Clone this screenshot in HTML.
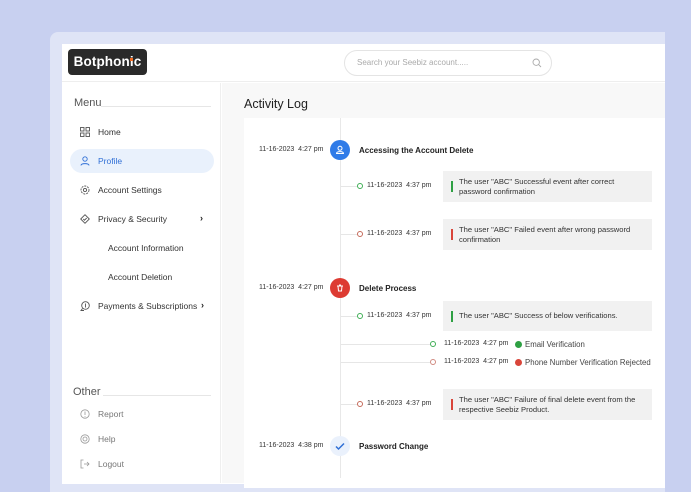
<!DOCTYPE html>
<html><head><style>
*{margin:0;padding:0;box-sizing:border-box}
body{width:691px;height:478px;overflow:hidden;background:#c8d0f0;font-family:"Liberation Sans",sans-serif;position:relative;color:#222}
.a{position:absolute}
.frame{left:50px;top:32px;width:615px;height:460px;background:#dfe4f6;border-radius:8px 0 0 0}
.white{left:62px;top:44px;width:603px;height:440px;background:#fff}
.hdr{left:62px;top:44px;width:603px;height:38px;background:#fff;border-bottom:1px solid #eee}
.logo{left:68px;top:49px;width:79px;height:26px;background:#2a2a2a;border-radius:4px;color:#fff;font-weight:bold;font-size:13.5px;line-height:26px;text-align:center;letter-spacing:0.1px}
.search{left:344px;top:50px;width:208px;height:26px;border:1px solid #e4e4e4;border-radius:13px;font-size:8px;color:#aaa;line-height:24px;padding-left:12px}
.side{left:62px;top:83px;width:159px;height:400px;background:#fff;border-right:1px solid #efefef}
.main{left:222px;top:83px;width:443px;height:400px;background:#f8f8f8}
.panel{left:244px;top:118px;width:421px;height:370px;background:#fff}
.sec{font-size:11px;color:#555}
.line{height:1px;background:#e6e6e6}
.item{font-size:8.5px;color:#333;left:98px}
.ico{left:80px;width:10px;height:10px}
.t{font-size:7px;color:#333}
.dot{width:6px;height:6px;border-radius:50%;border:1px solid}
.box{background:#f1f1f1;font-size:7.6px;color:#333;padding:0 8px;line-height:10px;display:flex;align-items:center}
.bar{width:2px;height:11px;margin-right:6px;flex:none}
.big{width:20px;height:20px;border-radius:50%}
.h{font-size:8px;font-weight:bold;color:#222;left:359px}
</style></head><body>
<div class="a frame"></div>
<div class="a white"></div>
<div class="a hdr"></div>
<div class="a logo">Botphon<span style="position:relative">i<span style="position:absolute;left:0.5px;top:4px;width:3px;height:3px;background:#f26a21"></span></span>c</div>
<div class="a search">Search your Seebiz account.....
<svg class="a" style="right:9px;top:7px" width="10" height="10" viewBox="0 0 10 10"><circle cx="4.2" cy="4.2" r="3.2" fill="none" stroke="#aaa" stroke-width="0.9"/><path d="M6.6 6.6L9 9" stroke="#aaa" stroke-width="0.9"/></svg></div>
<div class="a side"></div>
<div class="a main"></div>
<div class="a panel"></div>

<div class="a sec" style="left:74px;top:97px">Menu</div>
<div class="a line" style="left:101px;top:106px;width:110px"></div>
<svg class="a ico" style="top:127px" viewBox="0 0 10 10" fill="none" stroke="#555" stroke-width="0.9"><rect x="0.5" y="0.5" width="3.5" height="3.5"/><rect x="6" y="0.5" width="3.5" height="3.5"/><rect x="0.5" y="6" width="3.5" height="3.5"/><rect x="6" y="6" width="3.5" height="3.5"/></svg>
<div class="a item" style="top:127px">Home</div>
<div class="a" style="left:70px;top:149px;width:144px;height:24px;background:#e9f1fc;border-radius:12px"></div>
<svg class="a ico" style="top:156px" viewBox="0 0 10 10" fill="none" stroke="#2f6fd6" stroke-width="0.9"><circle cx="5" cy="3" r="2.2"/><path d="M1 9.5c0-2.5 8-2.5 8 0"/></svg>
<div class="a item" style="top:156px;color:#2f6fd6">Profile</div>
<svg class="a ico" style="top:185px" viewBox="0 0 10 10" fill="none" stroke="#555" stroke-width="0.9"><circle cx="5" cy="5" r="1.6"/><circle cx="5" cy="5" r="4" stroke-dasharray="2 1"/></svg>
<div class="a item" style="top:185px">Account Settings</div>
<svg class="a ico" style="top:214px" viewBox="0 0 10 10" fill="none" stroke="#555" stroke-width="0.9"><path d="M5 .7l4.3 4.3L5 9.3.7 5z" stroke-linejoin="round"/><path d="M3.3 5l1.2 1.2 2.2-2.2"/></svg>
<div class="a item" style="top:214px">Privacy &amp; Security</div>
<div class="a" style="left:200px;top:213px;font-size:9px;font-weight:bold">›</div>
<div class="a item" style="left:108px;top:243px">Account Information</div>
<div class="a item" style="left:108px;top:272px">Account Deletion</div>
<svg class="a ico" style="top:301px" viewBox="0 0 10 10" fill="none" stroke="#555" stroke-width="0.9"><circle cx="5.5" cy="4.5" r="3.8"/><path d="M2.5 7.5L1 9.5h3"/><path d="M5.5 2.5v4"/></svg>
<div class="a item" style="top:301px">Payments &amp; Subscriptions</div>
<div class="a" style="left:201px;top:300px;font-size:9px;font-weight:bold">›</div>

<div class="a sec" style="left:73px;top:386px">Other</div>
<div class="a line" style="left:103px;top:395px;width:108px"></div>
<svg class="a ico" style="top:409px" viewBox="0 0 10 10" fill="none" stroke="#999" stroke-width="0.8"><circle cx="5" cy="5" r="4.2"/><path d="M5 2.5v3.5M5 7v.7"/></svg>
<div class="a item" style="top:409px;color:#777">Report</div>
<svg class="a ico" style="top:434px" viewBox="0 0 10 10" fill="none" stroke="#999" stroke-width="0.8"><circle cx="5" cy="5" r="4.2"/><circle cx="5" cy="5" r="2"/></svg>
<div class="a item" style="top:434px;color:#777">Help</div>
<svg class="a ico" style="top:459px" viewBox="0 0 10 10" fill="none" stroke="#999" stroke-width="0.8"><path d="M3.5 1H1v8h2.5M4 5h5M7 3l2 2-2 2"/></svg>
<div class="a item" style="top:459px;color:#777">Logout</div>

<div class="a" style="left:244px;top:97px;font-size:12.5px;color:#222">Activity Log</div>

<div class="a" style="left:340px;top:118px;width:1px;height:360px;background:#e8e8e8"></div>

<div class="a t" style="left:259px;top:146px">11-16-2023&nbsp;&nbsp;4:27 pm</div>
<div class="a big" style="left:330px;top:140px;background:#2f7be8"><svg width="20" height="20" viewBox="0 0 20 20" fill="none" stroke="#fff" stroke-width="1"><circle cx="10" cy="8.3" r="2"/><path d="M6.5 13.5c0-2.5 7-2.5 7 0z"/></svg></div>
<div class="a h" style="top:146px">Accessing the Account Delete</div>

<div class="a line" style="left:341px;top:186px;width:16px"></div>
<div class="a dot" style="left:357px;top:183px;border-color:#3fae55"></div>
<div class="a t" style="left:367px;top:182px">11-16-2023&nbsp;&nbsp;4:37 pm</div>
<div class="a box" style="left:443px;top:171px;width:209px;height:31px"><div class="bar" style="background:#2ea043"></div><div>The user "ABC" Successful event after correct password confirmation</div></div>

<div class="a line" style="left:341px;top:234px;width:16px"></div>
<div class="a dot" style="left:357px;top:231px;border-color:#c46a5a"></div>
<div class="a t" style="left:367px;top:230px">11-16-2023&nbsp;&nbsp;4:37 pm</div>
<div class="a box" style="left:443px;top:219px;width:209px;height:31px"><div class="bar" style="background:#d9453a"></div><div>The user "ABC" Failed event after wrong password confirmation</div></div>

<div class="a t" style="left:259px;top:284px">11-16-2023&nbsp;&nbsp;4:27 pm</div>
<div class="a big" style="left:330px;top:278px;background:#dd3b32"><svg width="20" height="20" viewBox="0 0 20 20" fill="none" stroke="#fff" stroke-width="1"><path d="M7 8h6M8 8l.5 5h3l.5-5M9 7h2"/></svg></div>
<div class="a h" style="top:284px">Delete Process</div>

<div class="a line" style="left:341px;top:316px;width:16px"></div>
<div class="a dot" style="left:357px;top:313px;border-color:#3fae55"></div>
<div class="a t" style="left:367px;top:312px">11-16-2023&nbsp;&nbsp;4:37 pm</div>
<div class="a box" style="left:443px;top:301px;width:209px;height:30px"><div class="bar" style="background:#2ea043"></div><div>The user "ABC" Success of below verifications.</div></div>

<div class="a line" style="left:341px;top:344px;width:89px"></div>
<div class="a dot" style="left:430px;top:341px;border-color:#3fae55"></div>
<div class="a t" style="left:444px;top:340px">11-16-2023&nbsp;&nbsp;4:27 pm</div>
<div class="a" style="left:515px;top:341px;width:7px;height:7px;border-radius:50%;background:#2ea043"></div>
<div class="a t" style="left:525px;top:340px;font-size:7.8px;color:#444">Email Verification</div>
<div class="a line" style="left:341px;top:362px;width:89px"></div>
<div class="a dot" style="left:430px;top:359px;border-color:#d08a80"></div>
<div class="a t" style="left:444px;top:358px">11-16-2023&nbsp;&nbsp;4:27 pm</div>
<div class="a" style="left:515px;top:359px;width:7px;height:7px;border-radius:50%;background:#d9453a"></div>
<div class="a t" style="left:525px;top:358px;font-size:7.8px;color:#444">Phone Number Verification Rejected</div>

<div class="a line" style="left:341px;top:404px;width:16px"></div>
<div class="a dot" style="left:357px;top:401px;border-color:#c46a5a"></div>
<div class="a t" style="left:367px;top:400px">11-16-2023&nbsp;&nbsp;4:37 pm</div>
<div class="a box" style="left:443px;top:389px;width:209px;height:31px"><div class="bar" style="background:#d9453a"></div><div>The user "ABC" Failure of final delete event from the respective Seebiz Product.</div></div>

<div class="a t" style="left:259px;top:442px">11-16-2023&nbsp;&nbsp;4:38 pm</div>
<div class="a big" style="left:330px;top:436px;background:#eaf1fc"><svg width="20" height="20" viewBox="0 0 20 20" fill="none" stroke="#2f6fd6" stroke-width="1.5"><path d="M6 10.5l2.5 2.5 5.5-5.5"/></svg></div>
<div class="a h" style="top:442px">Password Change</div>
</body></html>
